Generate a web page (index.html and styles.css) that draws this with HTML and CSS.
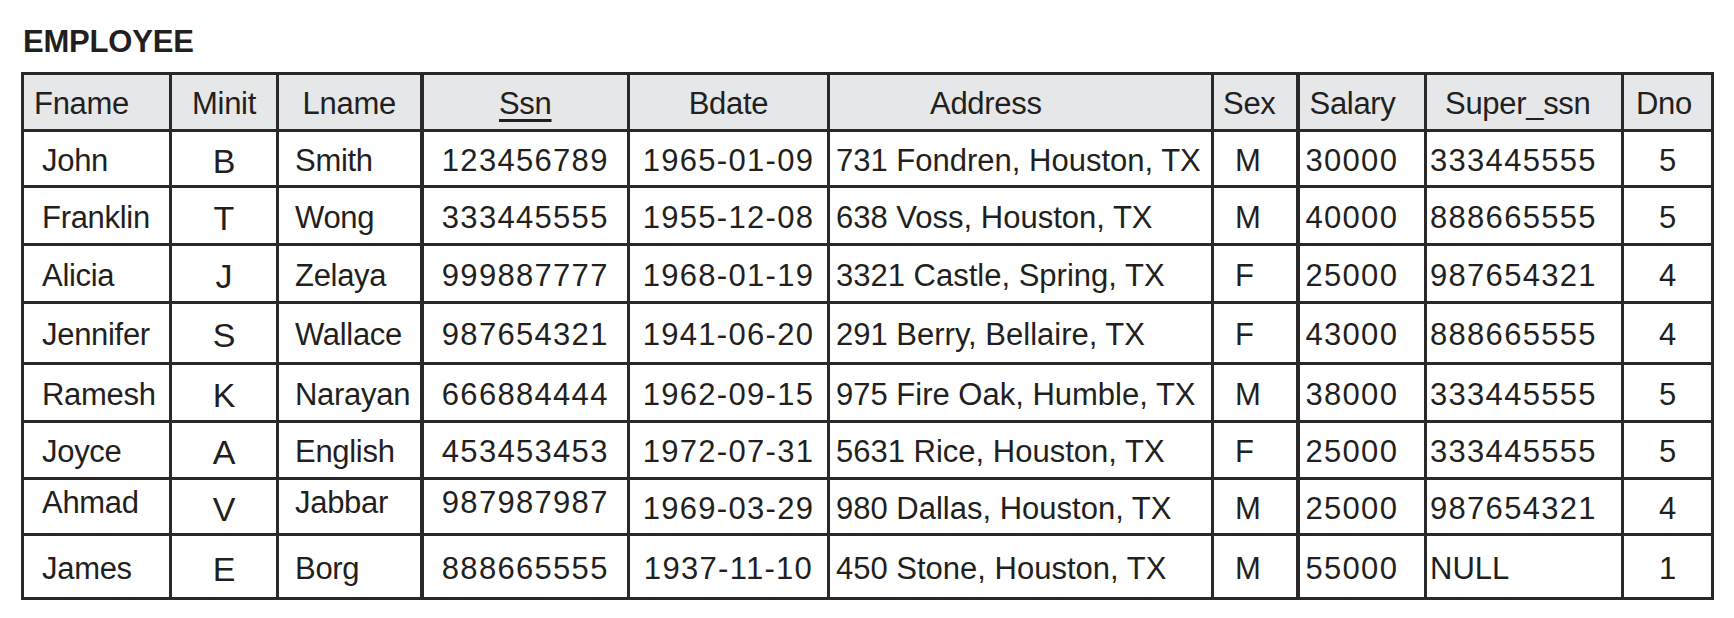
FILE: index.html
```html
<!DOCTYPE html>
<html lang="en">
<head>
<meta charset="utf-8">
<title>EMPLOYEE</title>
<link rel="stylesheet" href="styles.css">
</head>
<body>
<main class="page">
  <h1 class="title">EMPLOYEE</h1>
  <table class="rel">
    <colgroup>
      <col class="c-fname"><col class="c-minit"><col class="c-lname"><col class="c-ssn"><col class="c-bdate">
      <col class="c-address"><col class="c-sex"><col class="c-salary"><col class="c-super"><col class="c-dno">
    </colgroup>
    <thead>
      <tr>
        <th class="h-fname">Fname</th>
        <th class="h-center">Minit</th>
        <th class="h-center">Lname</th>
        <th class="h-center"><span class="key">Ssn</span></th>
        <th class="h-center">Bdate</th>
        <th class="h-address">Address</th>
        <th class="h-sex">Sex</th>
        <th class="h-salary">Salary</th>
        <th class="h-super">Super_ssn</th>
        <th class="h-dno">Dno</th>
      </tr>
    </thead>
    <tbody>
      <tr>
        <td class="d-fname">John</td><td class="d-minit">B</td><td class="d-lname">Smith</td>
        <td class="d-center num">123456789</td><td class="d-center num">1965-01-09</td>
        <td class="d-address">731 Fondren, Houston, TX</td><td class="d-sex">M</td>
        <td class="d-salary num">30000</td><td class="d-super num">333445555</td><td class="d-center">5</td>
      </tr>
      <tr>
        <td class="d-fname">Franklin</td><td class="d-minit">T</td><td class="d-lname">Wong</td>
        <td class="d-center num">333445555</td><td class="d-center num">1955-12-08</td>
        <td class="d-address">638 Voss, Houston, TX</td><td class="d-sex">M</td>
        <td class="d-salary num">40000</td><td class="d-super num">888665555</td><td class="d-center">5</td>
      </tr>
      <tr>
        <td class="d-fname">Alicia</td><td class="d-minit">J</td><td class="d-lname">Zelaya</td>
        <td class="d-center num">999887777</td><td class="d-center num">1968-01-19</td>
        <td class="d-address">3321 Castle, Spring, TX</td><td class="d-sex">F</td>
        <td class="d-salary num">25000</td><td class="d-super num">987654321</td><td class="d-center">4</td>
      </tr>
      <tr>
        <td class="d-fname">Jennifer</td><td class="d-minit">S</td><td class="d-lname">Wallace</td>
        <td class="d-center num">987654321</td><td class="d-center num">1941-06-20</td>
        <td class="d-address">291 Berry, Bellaire, TX</td><td class="d-sex">F</td>
        <td class="d-salary num">43000</td><td class="d-super num">888665555</td><td class="d-center">4</td>
      </tr>
      <tr>
        <td class="d-fname">Ramesh</td><td class="d-minit">K</td><td class="d-lname">Narayan</td>
        <td class="d-center num">666884444</td><td class="d-center num">1962-09-15</td>
        <td class="d-address">975 Fire Oak, Humble, TX</td><td class="d-sex">M</td>
        <td class="d-salary num">38000</td><td class="d-super num">333445555</td><td class="d-center">5</td>
      </tr>
      <tr>
        <td class="d-fname">Joyce</td><td class="d-minit">A</td><td class="d-lname">English</td>
        <td class="d-center num">453453453</td><td class="d-center num">1972-07-31</td>
        <td class="d-address">5631 Rice, Houston, TX</td><td class="d-sex">F</td>
        <td class="d-salary num">25000</td><td class="d-super num">333445555</td><td class="d-center">5</td>
      </tr>
      <tr>
        <td class="d-fname raised">Ahmad</td><td class="d-minit">V</td><td class="d-lname raised">Jabbar</td>
        <td class="d-center num raised">987987987</td><td class="d-center num">1969-03-29</td>
        <td class="d-address">980 Dallas, Houston, TX</td><td class="d-sex">M</td>
        <td class="d-salary num">25000</td><td class="d-super num">987654321</td><td class="d-center">4</td>
      </tr>
      <tr>
        <td class="d-fname">James</td><td class="d-minit">E</td><td class="d-lname">Borg</td>
        <td class="d-center num">888665555</td><td class="d-center num">1937-11-10</td>
        <td class="d-address">450 Stone, Houston, TX</td><td class="d-sex">M</td>
        <td class="d-salary num">55000</td><td class="d-super">NULL</td><td class="d-center">1</td>
      </tr>
    </tbody>
  </table>
</main>
</body>
</html>
```

FILE: styles.css
```css
html, body {
  margin: 0;
  padding: 0;
  background: #ffffff;
}

body {
  color: #231f20;
  font-family: "Liberation Sans", Arial, Helvetica, sans-serif;
}

.page {
  padding: 24px 0 0 21px;
}

.title {
  margin: 0 0 12px 2px;
  font-size: 31px;
  line-height: 36px;
  font-weight: 700;
  letter-spacing: -0.2px;
}

.rel {
  border-collapse: collapse;
  table-layout: fixed;
  width: 1690px;
  font-size: 31px;
  line-height: 34px;
}

.c-fname { width: 148px; }
.c-minit { width: 107px; }
.c-lname { width: 144px; }
.c-ssn { width: 207px; }
.c-bdate { width: 200px; }
.c-address { width: 384px; }
.c-sex { width: 85px; }
.c-salary { width: 128px; }
.c-super { width: 197px; }
.c-dno { width: 90px; }

.rel th,
.rel td {
  border: 3px solid #2a2828;
  padding: 4px 0 0 0;
  white-space: nowrap;
  vertical-align: middle;
}

.rel th:nth-child(4),
.rel td:nth-child(4) {
  border-left-width: 4px;
}

.rel th:nth-child(8),
.rel td:nth-child(8) {
  border-left-width: 4px;
}

.rel th {
  background: #e6e7e8;
  font-weight: 400;
  text-align: left;
  letter-spacing: -0.3px;
}

.rel thead tr { height: 57px; }
.rel tbody tr:nth-child(1) { height: 56px; }
.rel tbody tr:nth-child(2) { height: 58px; }
.rel tbody tr:nth-child(3) { height: 58px; }
.rel tbody tr:nth-child(4) { height: 61px; }
.rel tbody tr:nth-child(5) { height: 58px; }
.rel tbody tr:nth-child(6) { height: 57px; }
.rel tbody tr:nth-child(7) { height: 56px; }
.rel tbody tr:nth-child(8) { height: 64px; }

.key {
  text-decoration: underline;
  text-decoration-thickness: 3px;
  text-underline-offset: 5px;
}

.h-fname { padding-left: 10px !important; }
.h-center { text-align: center !important; }
.h-address { padding-left: 100px !important; }
.h-sex { padding-left: 9px !important; }
.h-salary { padding-left: 10px !important; }
.h-super { padding-left: 18px !important; }
.h-dno { padding-left: 12px !important; }

.d-fname { padding-left: 18px !important; letter-spacing: -0.3px; }
.d-lname { padding-left: 16px !important; letter-spacing: -0.3px; }
.d-minit { text-align: center; font-size: 34px; }
.d-center { text-align: center; }
.d-address { padding-left: 6px !important; }
.d-sex { padding-left: 21px !important; }
.d-salary { padding-left: 6px !important; }
.d-super { padding-left: 3px !important; }

.num {
  letter-spacing: 1.3px;
}

.raised {
  padding-top: 0 !important;
  padding-bottom: 8px !important;
}
```
